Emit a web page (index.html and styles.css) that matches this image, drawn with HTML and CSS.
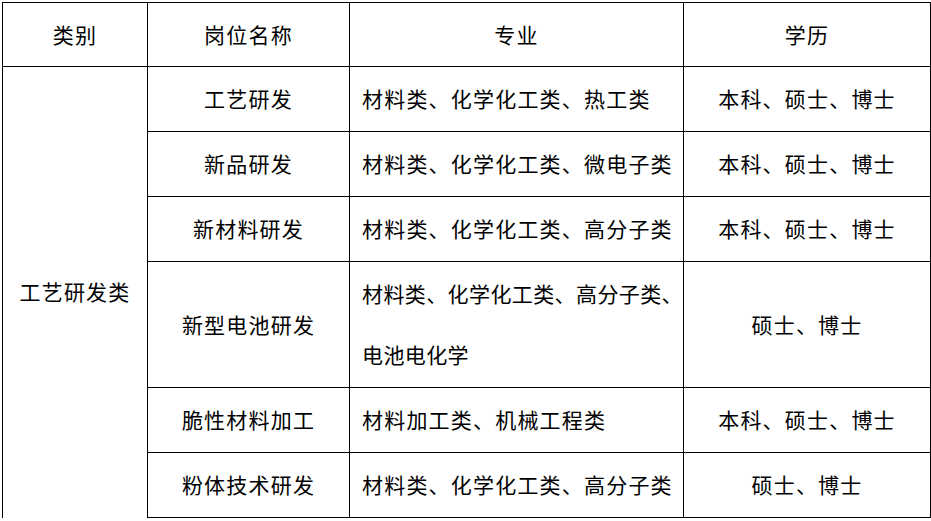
FILE: index.html
```html
<!DOCTYPE html>
<html lang="zh-CN">
<head>
<meta charset="utf-8">
<title>岗位</title>
<link rel="stylesheet" href="styles.css">
</head>
<body>
<table class="jobs">
  <colgroup>
    <col class="c1"><col class="c2"><col class="c3"><col class="c4">
  </colgroup>
  <thead>
    <tr class="head">
      <th>类别</th>
      <th>岗位名称</th>
      <th>专业</th>
      <th>学历</th>
    </tr>
  </thead>
  <tbody>
    <tr>
      <td class="cat" rowspan="6">工艺研发类</td>
      <td class="name">工艺研发</td>
      <td class="major">材料类、化学化工类、热工类</td>
      <td class="edu">本科、硕士、博士</td>
    </tr>
    <tr>
      <td class="name">新品研发</td>
      <td class="major">材料类、化学化工类、微电子类</td>
      <td class="edu">本科、硕士、博士</td>
    </tr>
    <tr>
      <td class="name">新材料研发</td>
      <td class="major">材料类、化学化工类、高分子类</td>
      <td class="edu">本科、硕士、博士</td>
    </tr>
    <tr class="tall">
      <td class="name">新型电池研发</td>
      <td class="major tight">材料类、化学化工类、高分子类、<br>电池电化学</td>
      <td class="edu">硕士、博士</td>
    </tr>
    <tr>
      <td class="name">脆性材料加工</td>
      <td class="major">材料加工类、机械工程类</td>
      <td class="edu">本科、硕士、博士</td>
    </tr>
    <tr>
      <td class="name">粉体技术研发</td>
      <td class="major">材料类、化学化工类、高分子类</td>
      <td class="edu">硕士、博士</td>
    </tr>
  </tbody>
</table>
</body>
</html>
```
FILE: styles.css
```css
html, body {
  margin: 0;
  padding: 0;
  background: #fff;
}

body {
  padding: 2px 0 0 2px;
  font-family: "Noto Sans CJK SC", "Noto Sans", sans-serif;
  color: #000;
}

.jobs {
  border-collapse: collapse;
  table-layout: fixed;
  width: 928px;
}

.c1 { width: 145px; }
.c2 { width: 202px; }
.c3 { width: 334px; }
.c4 { width: 247px; }

.jobs th,
.jobs td {
  border: 1px solid #000;
  font-size: 21px;
  font-weight: normal;
  line-height: 61px;
  padding: 1px 0 2px;
  text-align: center;
  vertical-align: middle;
  letter-spacing: 1.2px;
}

.jobs .head th {
  height: 63px;
  padding: 0;
  line-height: 63px;
}

.jobs td.major {
  text-align: left;
  padding-left: 12px;
  padding-right: 4px;
  letter-spacing: 1.2px;
  white-space: nowrap;
}

.jobs td.tight {
  letter-spacing: 0.4px;
}

.jobs td.cat {
  border-bottom: none;
}
```
